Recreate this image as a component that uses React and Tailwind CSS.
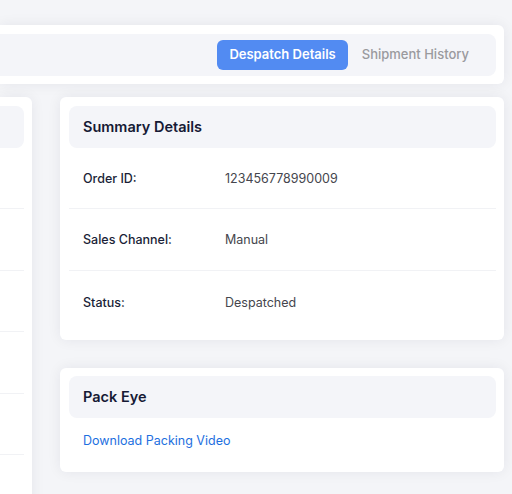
const font = { fontFamily: "Inter, 'Noto Sans', sans-serif" };

const summary = [
  { label: "Order ID:", value: "123456778990009" },
  { label: "Sales Channel:", value: "Manual" },
  { label: "Status:", value: "Despatched" },
];

const Card = ({ className = "", children }) => (
  <div
    className={`bg-white shadow-[0_0_14px_rgba(30,35,60,0.07)] ${className}`}
  >
    {children}
  </div>
);

const CardHeader = ({ title, top = "mt-[9px]" }) => (
  <div
    className={`ml-[9px] mr-[8px] ${top} flex h-[42px] items-center rounded-lg bg-[#f4f5f9] px-[14px]`}
  >
    <h2 className="text-[14.5px] font-semibold text-[#161a35]">{title}</h2>
  </div>
);

export default function App() {
  return (
    <div
      style={font}
      className="h-[494px] w-[512px] overflow-hidden bg-[#f4f5f8] pt-[25px] pr-[8px]"
    >
      {/* Tabs bar */}
      <Card className="rounded-r-md pt-[9px] pb-[8px] pr-[8px]">
        <div className="flex h-[42px] items-center justify-end gap-[2px] rounded-r-lg bg-[#f4f5f9] pr-[15px]">
          <button className="h-[30px] rounded-md bg-[#528bf2] px-[12px] text-[13px] font-semibold text-white">
            Despatch Details
          </button>
          <button className="h-[30px] px-[12px] text-[13px] font-medium text-[#9a9a9e]">
            Shipment History
          </button>
        </div>
      </Card>

      <div className="mt-[13px] flex gap-[28px]">
        {/* Left card (cut off) */}
        <Card className="h-[420px] w-[32px] rounded-r-md pt-[9px] pr-[8px]">
          <div className="h-[42px] rounded-r-lg bg-[#f4f5f9]" />
          <div className="h-[61px] border-b border-[#f1f2f5]" />
          <div className="h-[62px] border-b border-[#f1f2f5]" />
          <div className="h-[61px] border-b border-[#f1f2f5]" />
          <div className="h-[62px] border-b border-[#f1f2f5]" />
          <div className="h-[61px] border-b border-[#f1f2f5]" />
        </Card>

        <div className="flex flex-1 flex-col gap-[28px]">
          {/* Summary */}
          <Card className="h-[243px] rounded-md">
            <CardHeader title="Summary Details" />
            <div className="ml-[9px] mr-[8px]">
              {summary.map((row, i) => (
                <div
                  key={row.label}
                  className={`flex items-center px-[14px] pt-[2px] text-[12.5px] ${
                    i === 0 ? "h-[61px]" : "h-[62px]"
                  } ${i < summary.length - 1 ? "border-b border-[#f1f2f5]" : ""}`}
                >
                  <span className="w-[142px] font-medium text-[#1b1f38]">
                    {row.label}
                  </span>
                  <span className="text-[#45464d]">{row.value}</span>
                </div>
              ))}
            </div>
          </Card>

          {/* Pack Eye */}
          <Card className="h-[104px] rounded-md">
            <CardHeader title="Pack Eye" top="mt-[8px]" />
            <div className="ml-[9px] flex h-[44px] items-center px-[14px] pt-[2px]">
              <a href="#" className="text-[12.5px] text-[#1e6fe0]">
                Download Packing Video
              </a>
            </div>
          </Card>
        </div>
      </div>
    </div>
  );
}
